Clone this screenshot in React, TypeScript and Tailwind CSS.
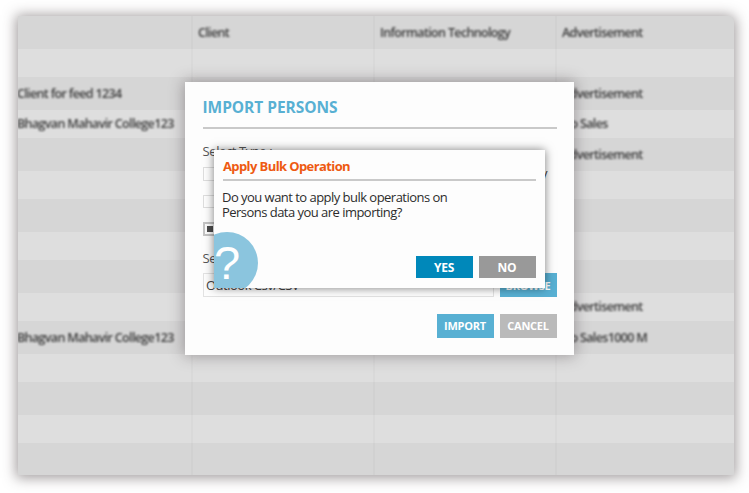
import React from "react";

// one entry per table row: first column, second, third, fourth
const ROWS: string[][] = [
  ["", "Client", "Information Technology", "Advertisement"],
  ["", "", "", ""],
  ["Client for feed 1234", "", "", "Advertisement"],
  ["Bhagvan Mahavir College123", "", "", "Go Sales"],
  ["", "", "", "Advertisement"],
  ["", "", "", ""],
  ["", "", "", ""],
  ["", "", "", ""],
  ["", "", "", ""],
  ["", "", "", "Advertisement"],
  ["Bhagvan Mahavir College123", "", "", "Go Sales1000 M"],
  ["", "", "", ""],
  ["", "", "", ""],
  ["", "", "", ""],
  ["", "", "", ""],
];

const PersonsTable = () => {
  return (
    <div className="flex h-[459px] w-[716px] flex-col overflow-hidden rounded-tr-md bg-[#d6d6d6] shadow-[0_1px_13px_2px_rgba(70,60,62,0.5)]">
      {ROWS.map((row, i) => (
        <div
          key={i}
          className={
            i % 2
              ? "grid h-[28.5px] shrink-0 grid-cols-[173px_182px_182px_1fr] items-center bg-[#dedede]"
              : "grid h-[32.5px] shrink-0 grid-cols-[173px_182px_182px_1fr] items-center bg-[#d6d6d6]"
          }
        >
          {row.map((cell, j) => (
            <div
              key={j}
              className={
                j === 0
                  ? "flex h-full items-center"
                  : "flex h-full items-center border-l-2 border-black/[0.02] pl-[6px]"
              }
            >
              <span className="-ml-px whitespace-nowrap pt-[2px] text-[12.5px] font-semibold tracking-[-0.65px] text-[#3a3a3a] blur-[1.2px]">
                {cell}
              </span>
            </div>
          ))}
        </div>
      ))}
    </div>
  );
};

const Button = ({
  label,
  className,
}: {
  label: string;
  className: string;
}) => (
  <button
    className={`flex w-[57px] items-center justify-center font-bold text-white ${className}`}
  >
    {label}
  </button>
);

const ImportModal = () => {
  return (
    <div className="absolute left-[185px] top-[82px] flex h-[273px] w-[389px] flex-col bg-[#fdfdfd] pl-[17.5px] pr-[17.5px] shadow-[0_0_14px_1px_rgba(60,50,55,0.4)]">
      <h1 className="mt-[14px] h-[33px] border-b-2 border-[#c9c9c9] text-[15.5px] font-bold leading-[22px] tracking-[-0.05px] text-[#58b0d3]">
        IMPORT PERSONS
      </h1>
      <p className="mt-[14px] h-4 text-[13px] leading-4 tracking-[-0.4px] text-[#555]">
        Select Type :
      </p>
      <div className="mt-[7px] flex h-[15px] items-center justify-between">
        <span className="h-[14px] w-[14px] border border-[#ddd]" />
        <span className="mr-[9px] text-[13px] leading-none text-[#444]">
          Company
        </span>
      </div>
      <span className="mt-[14px] h-[13px] w-[14px] border border-[#ddd]" />
      <span className="mt-[14px] flex h-[14px] w-[14px] items-center justify-center border-2 border-[#c4c4c4]">
        <span className="size-1.5 shrink-0 bg-[#4c4c4c]" />
      </span>
      <p className="mt-[14px] h-4 text-[13px] leading-4 tracking-[-0.4px] text-[#555]">
        Select File :
      </p>
      <div className="mt-[7px] flex h-6 gap-[6px]">
        <div className="flex flex-1 items-center border border-[#e2e2e2] pl-[2.5px] pt-px text-[13px] tracking-[-0.5px] text-[#444]">
          Outlook Csv/CSV
        </div>
        <Button
          label="BROWSE"
          className="bg-[#58b0d3] pt-[2px] text-[11px] tracking-[-0.25px]"
        />
      </div>
      <div className="mt-[17px] flex h-6 justify-end gap-[6px]">
        <Button
          label="IMPORT"
          className="bg-[#58b0d3] pt-px text-[11px] tracking-[-0.25px]"
        />
        <Button
          label="CANCEL"
          className="bg-[#bababa] pt-px text-[11px] tracking-[-0.25px]"
        />
      </div>
    </div>
  );
};

const ConfirmDialog = () => {
  return (
    <div className="absolute left-[214px] top-[150px] h-[138px] w-[331px] shadow-[0_0_9px_0px_rgba(0,0,0,0.5)]">
      <div className="relative flex h-full flex-col overflow-hidden bg-[#fdfdfd] pl-[9px] pr-[9.5px]">
        <h2 className="mt-[7px] h-[24px] border-b-2 border-[#c9c9c9] text-[13px] font-bold leading-[18px] tracking-[-0.6px] text-[#ee5a12]">
          Apply Bulk Operation
        </h2>
        <p className="-ml-px mt-[9px] text-[13px] leading-[15px] tracking-[-0.53px] text-[#2c2c2c]">
          Do you want to apply bulk operations on
          <br />
          Persons data you are importing?
        </p>
        <div className="mt-[36px] flex h-[22px] justify-end gap-[6px]">
          <Button label="YES" className="bg-[#0088ba] pt-px text-[12px] tracking-[-0.2px]" />
          <Button label="NO" className="bg-[#999] pt-px text-[12px] tracking-[-0.2px]" />
        </div>
        {/* help badge, cut off by the dialog corner */}
        <div className="absolute -left-[18px] top-[82px] flex size-[62px] items-center justify-center rounded-full bg-[#8bc5de]">
          <span className="pb-[2px] font-['Liberation_Sans',sans-serif] text-[47px] leading-none text-white">
            ?
          </span>
        </div>
      </div>
    </div>
  );
};

const App = () => {
  return (
    <main className="relative h-[493px] w-[749px] overflow-hidden bg-white pl-[18px] pt-4 font-['Open_Sans','Noto_Sans',sans-serif]">
      <PersonsTable />
      <ImportModal />
      <ConfirmDialog />
    </main>
  );
};

export default App;
